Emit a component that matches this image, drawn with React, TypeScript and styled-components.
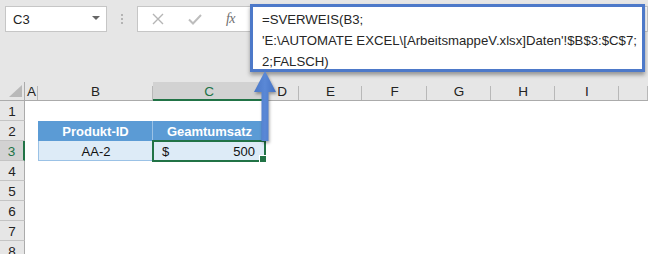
import React from "react";
import styled, { createGlobalStyle, css } from "styled-components";

const Global = createGlobalStyle`
  html, body { margin: 0; padding: 0; background: #ffffff; }
  body { font-family: "Liberation Sans", Arial, sans-serif; }
  * { box-sizing: border-box; }
`;

const GREEN = "#217346";

const Page = styled.div`
  position: relative;
  width: 648px;
  height: 254px;
  overflow: hidden;
  background: #ffffff;
`;

const FormulaBar = styled.div`
  height: 82px;
  background: #e6e6e6;
  display: flex;
  align-items: flex-start;
  padding: 6px 0 0 5px;
`;

const NameBox = styled.div`
  width: 102px;
  height: 26px;
  background: #ffffff;
  border: 1px solid #c6c6c6;
  display: flex;
  align-items: center;
  justify-content: space-between;
  padding: 0 6px 0 7px;
  font-size: 13px;
  color: #222;
`;

const Caret = styled.span`
  width: 0;
  height: 0;
  border-left: 4px solid transparent;
  border-right: 4px solid transparent;
  border-top: 4px solid #666;
  margin-top: -2px;
`;

const Grip = styled.div`
  width: 30px;
  height: 26px;
  display: flex;
  flex-direction: column;
  align-items: center;
  justify-content: center;
  gap: 2px;
`;

const Dot = styled.span`
  width: 2px;
  height: 2px;
  background: #b4b4b4;
`;

const FxBox = styled.div`
  width: 114px;
  height: 26px;
  background: #ffffff;
  border: 1px solid #c6c6c6;
  border-right: none;
  display: flex;
  align-items: center;
  justify-content: space-around;
  padding: 0 4px 0 2px;
`;

const Fx = styled.span`
  font-family: "Liberation Serif", "Times New Roman", serif;
  font-style: italic;
  font-size: 14px;
  color: #6f6f6f;
  letter-spacing: -0.5px;
`;

const FormulaInput = styled.div`
  flex: 1;
  height: 26px;
  background: #ffffff;
  border: 1px solid #c6c6c6;
`;

const Sheet = styled.div`
  display: grid;
  grid-template-columns: 25px 13px 115px 112px 34px 63px 65px 64px 64px 64px 1fr;
  grid-template-rows: 19px repeat(8, 20px);
  background: #ffffff;
`;

const ColHead = styled.div<{ $sel?: boolean; $corner?: boolean }>`
  position: relative;
  background: ${(p) => (p.$sel ? "#d2d2d2" : "#e6e6e6")};
  border-bottom: ${(p) => (p.$sel ? `2px solid ${GREEN}` : "1px solid #ababab")};
  display: flex;
  align-items: center;
  justify-content: center;
  font-size: 13.5px;
  color: ${(p) => (p.$sel ? GREEN : "#222")};
  padding-top: ${(p) => (p.$sel ? "1px" : "0")};
  &::after {
    content: "";
    position: absolute;
    right: 0;
    top: 4px;
    bottom: 0;
    width: 1px;
    background: #b8b8b8;
  }
  ${(p) =>
    p.$corner &&
    css`
      &::after {
        top: 0;
        background: #ababab;
      }
    `}
`;

const Corner = styled.span`
  position: absolute;
  right: 3px;
  bottom: 3px;
  width: 0;
  height: 0;
  border-left: 13px solid transparent;
  border-bottom: 12px solid #b9b9b9;
`;

const RowHead = styled.div<{ $sel?: boolean }>`
  background: ${(p) => (p.$sel ? "#d2d2d2" : "#e6e6e6")};
  border-bottom: 1px solid #c4c4c4;
  border-right: ${(p) => (p.$sel ? `2px solid ${GREEN}` : "1px solid #ababab")};
  display: flex;
  align-items: center;
  justify-content: center;
  font-size: 13.5px;
  color: ${(p) => (p.$sel ? GREEN : "#222")};
  padding-top: 1px;
`;

type Kind = "empty" | "head" | "data";

const Cell = styled.div<{ $kind: Kind; $align?: string; $active?: boolean; $first?: boolean }>`
  position: relative;
  display: flex;
  align-items: center;
  justify-content: ${(p) => p.$align || "center"};
  font-size: 13px;
  padding: 1px 8px 0 9px;
  ${(p) =>
    p.$kind === "head" &&
    css`
      background: #5b9bd5;
      color: #ffffff;
      font-weight: bold;
      border-right: ${p.$first ? "1px solid #9bc2e6" : "none"};
    `}
  ${(p) =>
    p.$kind === "data" &&
    css`
      background: #ddebf7;
      color: #111;
      border-bottom: 1px solid #9bc2e6;
      border-left: ${p.$first ? "1px solid #9bc2e6" : "none"};
      border-right: 1px solid #9bc2e6;
    `}
  ${(p) =>
    p.$active &&
    css`
      z-index: 2;
      outline: 2px solid ${GREEN};
      outline-offset: -1px;
      padding-right: 9px;
      &::after {
        content: "";
        position: absolute;
        right: -3px;
        bottom: -3px;
        width: 6px;
        height: 6px;
        background: ${GREEN};
        border: 1px solid #ffffff;
      }
    `}
`;

const Callout = styled.div`
  position: absolute;
  left: 250px;
  top: 4px;
  width: 395px;
  height: 68px;
  background: #ffffff;
  border: 3px solid #4d79c9;
  box-shadow: 0 3px 4px rgba(0, 0, 0, 0.35);
  padding: 2px 0 0 9px;
  font-size: 13.2px;
  line-height: 21px;
  color: #262626;
  white-space: pre;
  z-index: 5;
`;

const ArrowSvg = styled.svg`
  position: absolute;
  left: 253px;
  top: 71px;
  z-index: 6;
  overflow: visible;
`;

const cols = ["", "A", "B", "C", "D", "E", "F", "G", "H", "I", ""];

const CloseIcon = () => (
  <svg width="12" height="12" viewBox="0 0 12 12">
    <path d="M1 1 L11 11 M11 1 L1 11" stroke="#b5b5b5" strokeWidth="1.4" />
  </svg>
);

const CheckIcon = () => (
  <svg width="14" height="11" viewBox="0 0 14 11">
    <path d="M1 5.5 L5 9.5 L13 1" stroke="#bdbdbd" strokeWidth="2" fill="none" />
  </svg>
);

export default function App() {
  const rows = [1, 2, 3, 4, 5, 6, 7, 8];
  return (
    <Page>
      <Global />
      <FormulaBar>
        <NameBox>
          C3
          <Caret />
        </NameBox>
        <Grip>
          <Dot />
          <Dot />
          <Dot />
        </Grip>
        <FxBox>
          <CloseIcon />
          <CheckIcon />
          <Fx>fx</Fx>
        </FxBox>
        <FormulaInput />
      </FormulaBar>
      <Sheet>
        {cols.map((c, i) =>
          i === 0 ? (
            <ColHead key={i} $corner>
              <Corner />
            </ColHead>
          ) : (
            <ColHead key={i} $sel={c === "C"}>
              {c}
            </ColHead>
          )
        )}
        {rows.map((r) => (
          <React.Fragment key={r}>
            <RowHead $sel={r === 3}>{r}</RowHead>
            {cols.slice(1).map((c, i) => {
              if (r === 2 && c === "B")
                return (
                  <Cell key={i} $kind="head" $first>
                    Produkt-ID
                  </Cell>
                );
              if (r === 2 && c === "C")
                return (
                  <Cell key={i} $kind="head">
                    Geamtumsatz
                  </Cell>
                );
              if (r === 3 && c === "B")
                return (
                  <Cell key={i} $kind="data" $first>
                    AA-2
                  </Cell>
                );
              if (r === 3 && c === "C")
                return (
                  <Cell key={i} $kind="data" $align="space-between" $active>
                    <span>$</span>
                    <span>500</span>
                  </Cell>
                );
              return <Cell key={i} $kind="empty" />;
            })}
          </React.Fragment>
        ))}
      </Sheet>
      <Callout>
        {"=SVERWEIS(B3;\n'E:\\AUTOMATE EXCEL\\[ArbeitsmappeV.xlsx]Daten'!$B$3:$C$7;\n2;FALSCH)"}
      </Callout>
      <ArrowSvg width="26" height="71" viewBox="0 0 26 71">
        <defs>
          <linearGradient id="ag" x1="0" y1="0" x2="1" y2="0">
            <stop offset="0" stopColor="#4a78c8" />
            <stop offset="0.5" stopColor="#5a88d6" />
            <stop offset="1" stopColor="#4472c4" />
          </linearGradient>
        </defs>
        <path
          d="M12 0 L23 21 L15.5 21 L15.5 70 L8.5 70 L8.5 21 L1 21 Z"
          fill="url(#ag)"
          style={{ filter: "drop-shadow(1px 2px 1.5px rgba(0,0,0,0.35))" }}
        />
      </ArrowSvg>
    </Page>
  );
}
